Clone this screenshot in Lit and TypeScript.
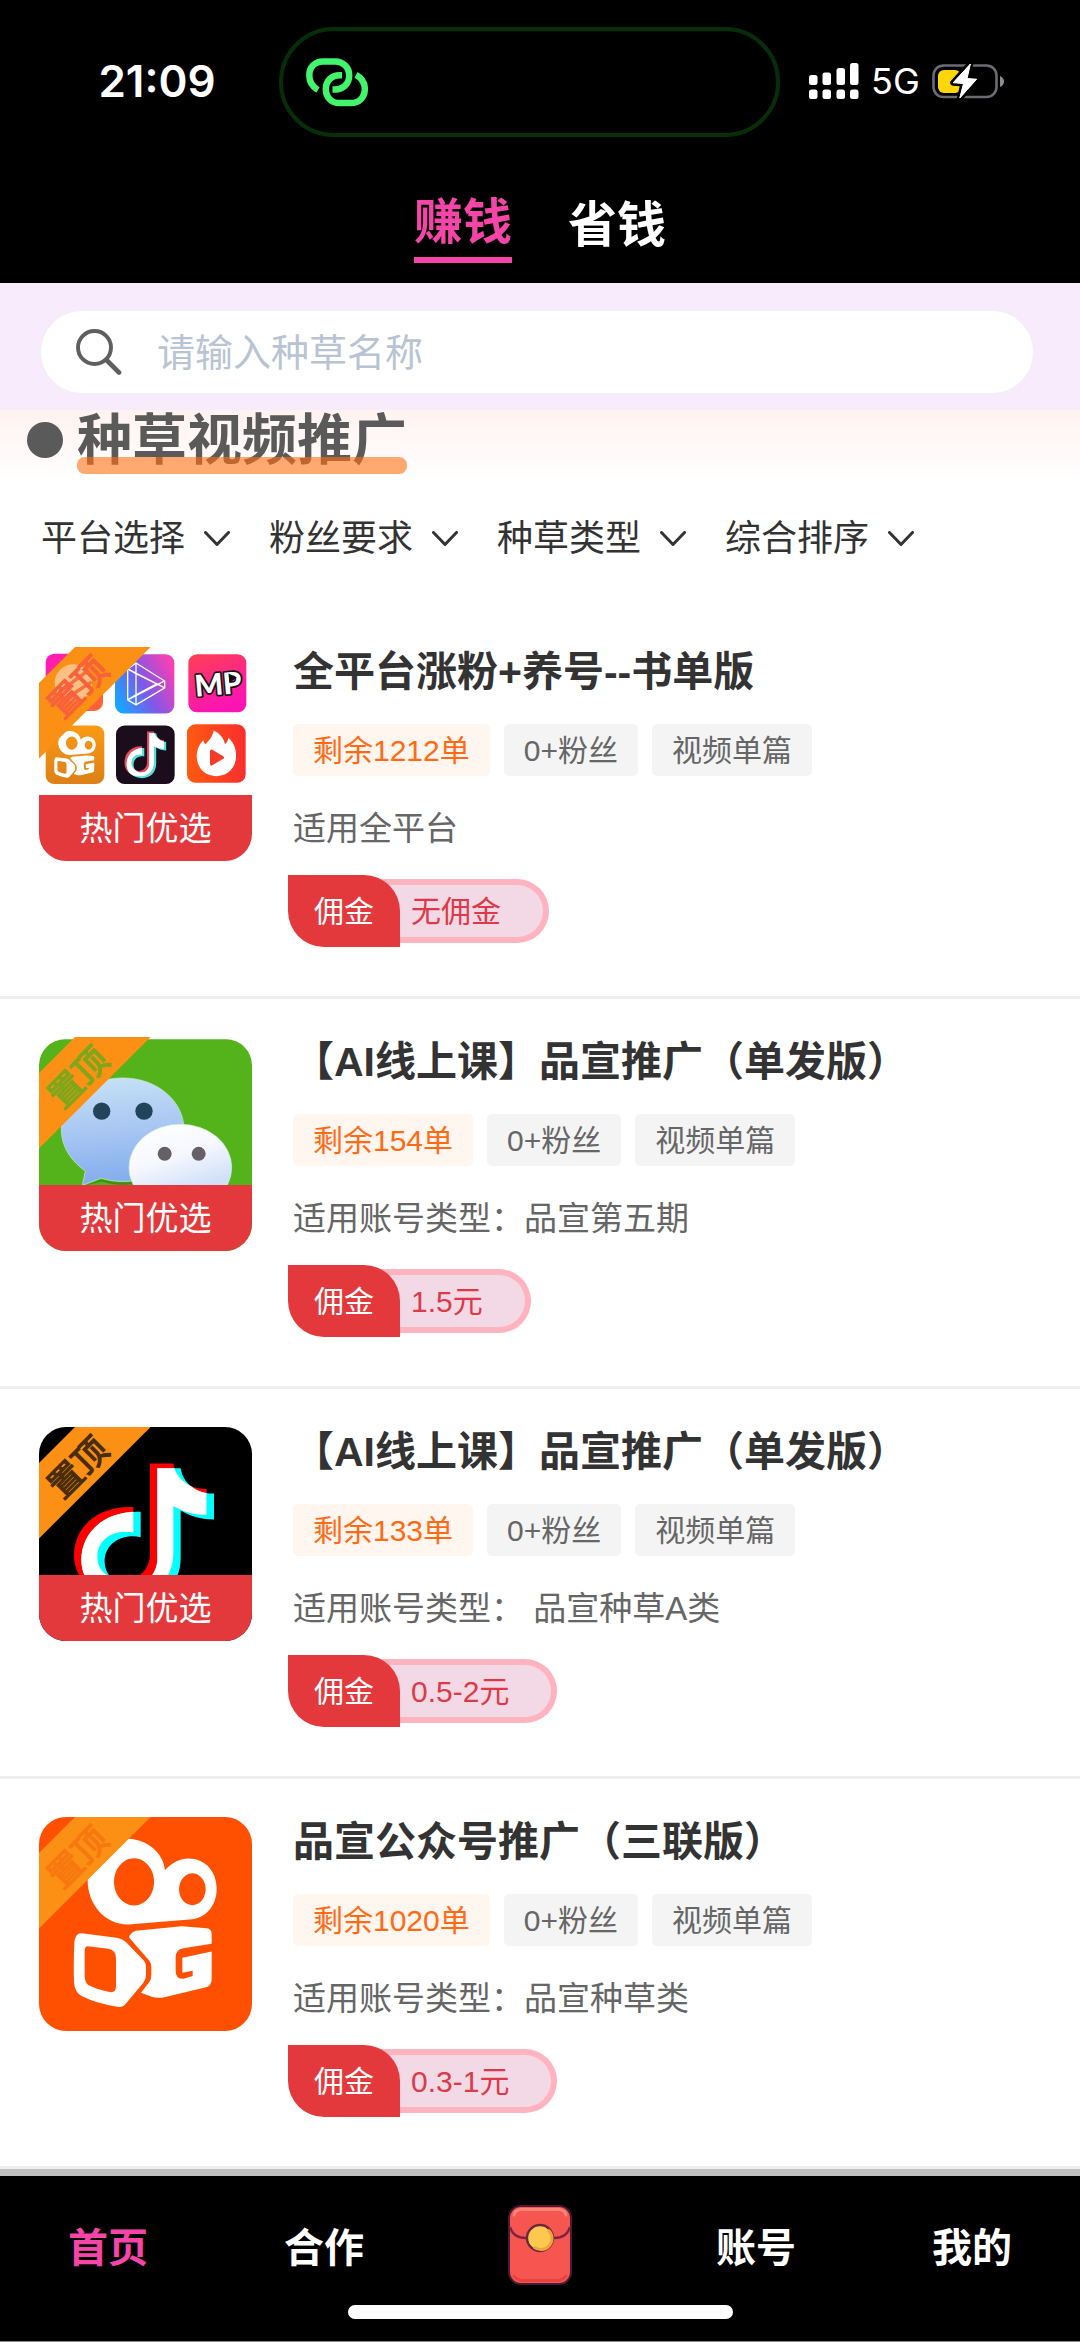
import { LitElement, html, svg, css, nothing, TemplateResult, SVGTemplateResult } from "lit";
import { customElement, property } from "lit/decorators.js";

const CJK = css`"Liberation Sans", "Noto Sans CJK SC", sans-serif`;

type Art = "grid" | "wechat" | "note" | "camera";

interface Task {
  title: string;
  left: string;
  note: string;
  pay: string;
  art: Art;
  hot: boolean;
}

const TASKS: Task[] = [
  { title: "全平台涨粉+养号--书单版", left: "剩余1212单", note: "适用全平台", pay: "无佣金", art: "grid", hot: true },
  { title: "【AI线上课】品宣推广（单发版）", left: "剩余154单", note: "适用账号类型：品宣第五期", pay: "1.5元", art: "wechat", hot: true },
  { title: "【AI线上课】品宣推广（单发版）", left: "剩余133单", note: "适用账号类型： 品宣种草A类", pay: "0.5-2元", art: "note", hot: true },
  { title: "品宣公众号推广（三联版）", left: "剩余1020单", note: "适用账号类型：品宣种草类", pay: "0.3-1元", art: "camera", hot: false },
];

const FILTERS = ["平台选择", "粉丝要求", "种草类型", "综合排序"];

/* Camera mascot with two round eyes, shared by the large and the small tile. */
const cameraLogo = (): SVGTemplateResult => svg`
  <path fill="#fff" fill-rule="evenodd" d="M325 117C385 120 430 160 435 212C455 190 480 177 505 177C555 177 590 215 590 268C590 320 555 358 508 360L325 375C250 375 204 310 203 245C203 175 262 114 325 117Z
    M342 176a60 71 0 1 0 .1 0Z M517 221a40 48 0 1 0 .1 0Z"/>
  <path fill="#fff" fill-rule="evenodd" d="M185 401L290 415Q308 418 320 430L370 482Q378 490 378 505V525Q378 540 370 550L318 612Q308 625 292 622Q230 613 185 590Q165 580 162 550Q160 500 163 430Q165 400 185 401Z
    M203 440L265 448Q288 452 288 478V560Q288 582 268 578Q230 570 205 557Q195 550 194 530V455Q194 440 203 440Z"/>
  <path fill="#fff" d="M348 394L485 380L560 386Q575 388 575 404V433L490 446Q468 450 467 472V515Q467 540 490 538L518 530V514L487 520V475L575 456V540Q575 560 555 564L430 594Q410 597 395 592L363 580L388 548Q394 540 394 525V505Q394 490 386 482L328 415Q326 408 332 404Q338 396 348 394Z"/>`;

const NOTE =
  "M390 190H460C466 232 505 268 560 266V344C525 344 490 335 460 317V460C460 540 400 590 320 590C225 590 162 540 162 465C162 380 235 316 340 321V397C285 385 232 415 232 470C232 515 270 540 310 540C355 540 390 510 390 460Z";

/* Musical note: a red and a cyan copy, white where they overlap. */
const noteLogo = (id: string, red: string, cyan: string): SVGTemplateResult => svg`
  <clipPath id=${id}><path d=${NOTE}/></clipPath>
  <path d=${NOTE} fill=${red}/>
  <path d=${NOTE} fill=${cyan} transform="translate(22 14)"/>
  <g clip-path="url(#${id})"><path d=${NOTE} fill="#fff" transform="translate(22 14)"/></g>`;

const gridArt = (): SVGTemplateResult => svg`
  <linearGradient id="g1" x1="0" y1="0" x2="1" y2="1"><stop offset="0" stop-color="#ff14c4"/><stop offset=".5" stop-color="#ff3a70"/><stop offset="1" stop-color="#ff6a2c"/></linearGradient>
  <linearGradient id="g2" x1="0" y1=".8" x2="1" y2=".3"><stop offset="0" stop-color="#12a8ff"/><stop offset=".5" stop-color="#8058e8"/><stop offset="1" stop-color="#f63fb6"/></linearGradient>
  <linearGradient id="g3" x1="0" y1="0" x2=".4" y2="1"><stop offset="0" stop-color="#ff4050"/><stop offset="1" stop-color="#fb14b4"/></linearGradient>
  <linearGradient id="g4" x1="0" y1="0" x2="0" y2="1"><stop offset="0" stop-color="#fa9a14"/><stop offset="1" stop-color="#dc8018"/></linearGradient>
  <linearGradient id="g6" x1="0" y1="0" x2="1" y2="0"><stop offset="0" stop-color="#ff5a10"/><stop offset="1" stop-color="#f92e2e"/></linearGradient>
  <rect width="800" height="800" fill="#fff"/>
  <g transform="translate(0 -28)">
    <rect x="77" y="100" width="172" height="172" rx="26" fill="url(#g1)"/>
    <rect x="285" y="102" width="178" height="178" rx="26" fill="url(#g2)"/>
    <g fill="none" stroke="#fff" stroke-width="4" stroke-linejoin="round">
      <path d="M348 128L434 182V203L348 254L323 239V146Z"/>
      <path d="M348 128V254M323 146L434 203M323 239L434 182M323 146L348 160M348 160L410 191L348 224L323 239"/>
    </g>
    <rect x="505" y="102" width="174" height="174" rx="26" fill="url(#g3)"/>
    <g transform="rotate(-5 592 190)">
      <text class="mp" x="594" y="224" text-anchor="middle">MP</text>
      <path d="M628 163L652 177L628 191Z" fill="#111"/>
    </g>
    <rect x="77" y="316" width="176" height="176" rx="26" fill="url(#g4)"/>
    <g transform="translate(56 300) scale(.29 .278)">${cameraLogo()}</g>
    <rect x="288" y="316" width="176" height="176" rx="26" fill="#1b0d1c"/>
    <g transform="translate(265 270) scale(.298 .338)">${noteLogo("noteSmall", "#f0485e", "#4fe3dc")}</g>
    <rect x="501" y="312" width="176" height="176" rx="26" fill="url(#g6)"/>
    <path fill="#fff" d="M581 331C600 340 612 355 615 372C621 368 624 361 625 353C642 368 649 388 648 410C647 444 622 468 589 468C556 468 531 444 530 410C530 388 538 372 550 360C551 366 553 370 557 372C566 362 578 350 581 331Z"/>
    <path fill="#f43c28" d="M570 393Q570 386 577 389L610 408Q615 412 610 416L577 435Q570 438 570 431Z"/>
  </g>`;

const wechatArt = (): SVGTemplateResult => svg`
  <linearGradient id="w1" x1=".4" y1="0" x2=".5" y2="1"><stop offset="0" stop-color="#c6e0f6"/><stop offset=".55" stop-color="#a3c3f2"/><stop offset="1" stop-color="#80abec"/></linearGradient>
  <linearGradient id="w2" x1=".2" y1="0" x2=".6" y2="1"><stop offset="0" stop-color="#fff"/><stop offset=".4" stop-color="#f6f8fe"/><stop offset=".8" stop-color="#cfe0f8"/></linearGradient>
  <rect width="800" height="800" fill="#fff"/>
  <rect x="57" y="59" width="639" height="800" rx="78" fill="#54b21b"/>
  <path fill="#3f8f16" d="M190 500L245 480C300 496 370 490 420 462V470C370 500 300 504 245 486Z"/>
  <path fill="url(#w1)" stroke="#cfe9dc" stroke-width="2" d="M308 175C412 175 492 245 492 330C492 416 412 486 308 486C285 486 262 482 243 476L187 498L196 455C152 424 124 380 124 330C124 245 205 175 308 175Z"/>
  <circle cx="245" cy="275" r="26" fill="#21445a"/><circle cx="372" cy="275" r="26" fill="#21445a"/>
  <ellipse cx="481" cy="444" rx="154" ry="130" fill="url(#w2)" stroke="#d5ecdf" stroke-width="2"/>
  <circle cx="434" cy="403" r="21" fill="#655f66"/><circle cx="536" cy="403" r="21" fill="#655f66"/>`;

const ART: Record<Art, { draw: () => SVGTemplateResult; ink: string }> = {
  grid: { draw: gridArt, ink: "#f8613a" },
  wechat: { draw: wechatArt, ink: "#7fa71a" },
  note: {
    draw: () => svg`<rect width="800" height="800" fill="#000"/><g transform="translate(0 -28)">${noteLogo("noteLarge", "#ff0000", "#00ffff")}</g>`,
    ink: "#4a2d08",
  },
  camera: { draw: () => svg`<rect width="800" height="800" fill="#ff4f00"/>${cameraLogo()}`, ink: "#f8770e" },
};

@customElement("task-card")
class TaskCard extends LitElement {
  @property({ attribute: false }) task!: Task;

  static styles = css`
    :host {
      display: flex;
      align-items: flex-start;
      gap: 36px;
      padding: 38px 40px 49px 39px;
      border-bottom: 3px solid #eee;
      font-family: ${CJK};
    }
    .thumb {
      position: relative;
      flex: none;
      width: 213px;
      height: 214px;
      border-radius: 27px;
      overflow: hidden;
    }
    .art {
      display: block;
      width: 100%;
      height: 100%;
    }
    .pin {
      font: 400 102px "Noto Sans CJK SC", sans-serif;
      stroke-width: 4px;
    }
    .mp {
      font: 900 90px Lato, "Liberation Sans", sans-serif;
      fill: #fff;
      stroke: #111;
      stroke-width: 10px;
      stroke-linejoin: round;
      paint-order: stroke;
    }
    .hot {
      position: absolute;
      inset: auto 0 0 0;
      padding-top: 2px;
      background: #e4393c;
      color: #fff;
      font-size: 33px;
      line-height: 64px;
      text-align: center;
    }
    .body {
      flex: 1;
      min-width: 0;
    }
    .title,
    .tags,
    .note {
      margin: 0;
      padding-left: 5px;
    }
    .title {
      color: #333;
      font-size: 41px;
      font-weight: 700;
      line-height: 50px;
    }
    .tags {
      display: flex;
      gap: 14px;
      margin-top: 27px;
    }
    .tag {
      padding: 2px 20px 0;
      border-radius: 5px;
      background: #f4f4f4;
      color: #666;
      font-size: 30px;
      line-height: 50px;
    }
    .left {
      background: #fff6f0;
      color: #ff6a14;
    }
    .note {
      margin-top: 32px;
      color: #666;
      font-size: 33px;
      line-height: 42px;
      white-space: pre-wrap;
    }
    .pay {
      display: flex;
      align-items: center;
      margin-top: 25px;
      font-size: 30px;
    }
    .leaf {
      z-index: 1;
      width: 112px;
      padding-top: 2px;
      border-radius: 0 36px 0 36px;
      background: #e4393c;
      color: #fff;
      line-height: 70px;
      text-align: center;
    }
    .amount {
      margin-left: -32px;
      padding: 2px 42px 0 43px;
      border: 6px solid #ffb3bf;
      border-left: 0;
      border-radius: 0 32px 32px 0;
      background: #f3d9e5;
      color: #dc3a48;
      line-height: 50px;
    }
  `;

  render(): TemplateResult {
    const t = this.task;
    const art = ART[t.art];
    return html`
      <div class="thumb">
        <svg class="art" viewBox="57 52 639 643" preserveAspectRatio="none" aria-hidden="true">
          ${art.draw()}
          <path d="M165 52H392L57 387V160Z" fill="#fb9014" />
          ${t.art === "grid"
            ? svg`<g transform="translate(0 -28)"><circle cx="160" cy="188" r="56" fill="#fcc084"/><path d="M118 215L205 150M130 240L215 185" stroke="#f8703c" stroke-width="10"/><circle cx="258" cy="165" r="7" fill="#fdbb78"/><path d="M125 298L150 275L148 288Z" fill="#fff"/></g>`
            : nothing}
          <text class="pin" fill=${art.ink} stroke=${art.ink} text-anchor="middle" transform="translate(174 174) rotate(-45)" y="36">置顶</text>
        </svg>
        ${t.hot ? html`<div class="hot">热门优选</div>` : nothing}
      </div>
      <div class="body">
        <h2 class="title">${t.title}</h2>
        <div class="tags">
          <span class="tag left">${t.left}</span>
          <span class="tag">0+粉丝</span>
          <span class="tag">视频单篇</span>
        </div>
        <p class="note">${t.note}</p>
        <div class="pay"><span class="leaf">佣金</span><span class="amount">${t.pay}</span></div>
      </div>
    `;
  }
}

@customElement("app-root")
class AppRoot extends LitElement {
  static styles = css`
    :host {
      display: flex;
      flex-direction: column;
      min-height: 100vh;
      background: #fff;
      font-family: ${CJK};
    }
    .top {
      padding-top: 27px;
      background: #000;
      color: #fff;
    }
    .status {
      display: grid;
      grid-template-columns: 279fr 501fr 300fr;
      align-items: center;
      font-family: Inter, sans-serif;
    }
    .time {
      padding: 0 0 2px 35px;
      font-size: 44px;
      font-weight: 600;
      line-height: 48px;
      text-align: center;
    }
    .island {
      display: flex;
      align-items: center;
      box-sizing: border-box;
      height: 110px;
      padding-left: 23px;
      border: 4px solid #062f08;
      border-radius: 55px;
    }
    .signals {
      display: flex;
      align-items: center;
      gap: 12px;
      padding: 0 0 2px 29px;
      font-size: 36px;
      line-height: 40px;
    }
    .modes {
      box-sizing: border-box;
      display: flex;
      justify-content: center;
      align-items: center;
      gap: 56px;
      height: 146px;
      padding-top: 35px;
    }
    .mode {
      padding: 0 0 5px;
      border: 0;
      background: none;
      color: #fff;
      font-family: inherit;
      font-size: 49px;
      font-weight: 700;
      line-height: 60px;
    }
    .chosen {
      border-bottom: 6px solid #f545a8;
      color: #f545a8;
    }
    .search {
      padding: 28px 47px 17px 41px;
      background: #f8ecfc;
    }
    .field {
      display: flex;
      align-items: center;
      gap: 35px;
      height: 82px;
      padding: 0 35px;
      border-radius: 41px;
      background: #fff;
    }
    .glass {
      flex: none;
    }
    .query {
      flex: 1;
      min-width: 0;
      padding: 2px 0 0;
      border: 0;
      outline: 0;
      background: none;
      color: #333;
      font-family: inherit;
      font-size: 38px;
      line-height: 56px;
    }
    .query::placeholder {
      color: #b8c3d3;
      opacity: 1;
    }
    .section {
      display: flex;
      align-items: center;
      gap: 14px;
      height: 60px;
      padding: 0 27px 10px;
      background: linear-gradient(#fff2f1, #fff);
    }
    .dot {
      width: 36px;
      height: 36px;
      border-radius: 50%;
      background: #5a5a5a;
    }
    .heading {
      position: relative;
      margin: 0;
      color: #5a5a5a;
      font-size: 55px;
      font-weight: 700;
      line-height: 60px;
    }
    .heading::after {
      content: "";
      position: absolute;
      inset: auto 0 -4px 0;
      height: 17px;
      border-radius: 8px;
      background: rgba(255, 112, 16, 0.6);
    }
    .filters {
      display: flex;
      gap: 39px;
      padding: 35px 41px 46px;
    }
    .filter {
      display: flex;
      align-items: center;
      gap: 18px;
    }
    .pick {
      appearance: none;
      margin: 0;
      padding: 0;
      border: 0;
      background: none;
      color: #333;
      font-family: inherit;
      font-size: 36px;
      line-height: 48px;
    }
    .chevron {
      pointer-events: none;
    }
    .dock {
      margin-top: auto;
      border-top: 7px solid #c0c0c0;
      border-bottom: 1px solid #8a8a8a;
      padding: 29px 0 22px;
      background: #000;
    }
    .links {
      display: grid;
      grid-template-columns: repeat(5, 1fr);
      align-items: center;
      justify-items: center;
      height: 80px;
    }
    .link {
      padding-top: 5px;
      color: #fff;
      font-size: 40px;
      font-weight: 700;
      line-height: 48px;
      text-decoration: none;
    }
    .current {
      color: #f545a8;
    }
    .packet {
      display: block;
    }
    .handle {
      width: 385px;
      height: 14px;
      margin: 20px auto 0;
      border-radius: 7px;
      background: #fff;
    }
  `;

  render(): TemplateResult {
    return html`
      <header class="top">
        <div class="status">
          <span class="time">21:09</span>
          <div class="island">
            <svg width="62" height="49" viewBox="0 0 62 49" fill="none" stroke="#42f56c" stroke-width="6.5" aria-hidden="true">
              <path d="M12 32C6 28.500 3.300 23.500 3.300 17.500C3.300 9 9 3.500 17 3.500H29C37 3.500 43.200 9 43.200 17.500C43.200 26 37 31.500 29 31.500H26.500" />
              <path d="M36 17.200H33.500C25.500 17.200 19.800 23 19.800 31C19.800 39.500 25.500 45 33.500 45H45C53 45 58.800 39.500 58.800 31C58.800 25 56 20 50 16.800" />
            </svg>
          </div>
          <div class="signals">
            <svg width="50" height="36" viewBox="0 0 50 36" fill="#fff" aria-hidden="true">
              <rect x="0" y="12" width="8.500" height="10" rx="2.500" /><rect x="13.500" y="9.500" width="8.500" height="12.500" rx="2.500" />
              <rect x="27.500" y="5" width="8.500" height="17" rx="2.500" /><rect x="41" y="0" width="8.500" height="22" rx="2.500" />
              <rect x="0" y="26.500" width="8.500" height="9.500" rx="2.500" /><rect x="13.500" y="26.500" width="8.500" height="9.500" rx="2.500" />
              <rect x="27.500" y="26.500" width="8.500" height="9.500" rx="2.500" /><rect x="41" y="26.500" width="8.500" height="9.500" rx="2.500" />
            </svg>
            <span>5G</span>
            <svg width="72" height="36" viewBox="0 0 72 36" aria-hidden="true">
              <rect x="1.500" y="2.500" width="63" height="31.500" rx="10" fill="none" stroke="#6c6c70" stroke-width="2.600" />
              <path d="M68 13Q72 15 72 18.500Q72 22 68 24Z" fill="#8c8c90" />
              <rect x="6" y="7" width="23" height="23" rx="6" fill="#ffd60a" />
              <path d="M38.400 .7L21.200 19.700L31.500 20.500L27.800 35.300L44.600 16.200L35 15.600Z" fill="#fff" stroke="#000" stroke-width="6" stroke-linejoin="round" paint-order="stroke" />
              <path d="M38.400 1L21.200 19.700L31.500 20.500L27.800 35L44.600 16.200L35 15.600Z" fill="#fff" stroke="#fff" stroke-linejoin="round" />
            </svg>
          </div>
        </div>
        <div class="modes">
          <button class="mode chosen">赚钱</button>
          <button class="mode">省钱</button>
        </div>
      </header>

      <div class="search">
        <label class="field">
          <svg class="glass" width="46" height="46" viewBox="0 0 46 46" fill="none" stroke="#5f5f5f" stroke-linecap="round" aria-hidden="true">
            <circle cx="18.500" cy="18.500" r="16.500" stroke-width="3.900" />
            <path d="M30.500 31L43 43.500" stroke-width="4.600" />
          </svg>
          <input class="query" type="text" placeholder="请输入种草名称" aria-label="请输入种草名称" />
        </label>
      </div>

      <div class="section">
        <span class="dot"></span>
        <h1 class="heading">种草视频推广</h1>
      </div>

      <div class="filters">
        ${FILTERS.map(
          (name) => html`
            <label class="filter">
              <select class="pick" aria-label=${name}>
                <option>${name}</option>
              </select>
              <svg class="chevron" width="26" height="16" viewBox="0 0 26 16" fill="none" stroke="#333" stroke-width="3" stroke-linecap="round" stroke-linejoin="round" aria-hidden="true">
                <path d="M1.500 1.500L13 13.500L24.500 1.500" />
              </svg>
            </label>
          `
        )}
      </div>

      <main>${TASKS.map((task) => html`<task-card .task=${task}></task-card>`)}</main>

      <nav class="dock">
        <div class="links">
          <a class="link current" href="#home">首页</a>
          <a class="link" href="#partner">合作</a>
          <a class="packet" href="#packet" aria-label="红包">
            <svg class="packet" width="64" height="80" viewBox="0 0 64 80" aria-hidden="true">
              <rect x="1" y="1" width="62" height="78" rx="12" fill="#f75650" stroke="#4a1a34" stroke-width="2" />
              <path d="M6 10Q7 5 13 4.500H51Q57 5 58 10" fill="none" stroke="#ff8478" stroke-width="3" stroke-linecap="round" />
              <path d="M6 71Q9 75 14 75.500H50Q55 75 58 71" fill="none" stroke="#e8433f" stroke-width="3" stroke-linecap="round" />
              <path d="M2 22Q5 33 18 33H46Q59 33 62 22" fill="none" stroke="#7c2440" stroke-width="2.400" />
              <circle cx="32" cy="33" r="13" fill="#fcc850" stroke="#6a2a3c" stroke-width="2.400" />
              <path d="M40 25A11 11 0 0 1 26 42" fill="none" stroke="#eda63a" stroke-width="3" />
            </svg>
          </a>
          <a class="link" href="#account">账号</a>
          <a class="link" href="#mine">我的</a>
        </div>
        <div class="handle"></div>
      </nav>
    `;
  }
}
